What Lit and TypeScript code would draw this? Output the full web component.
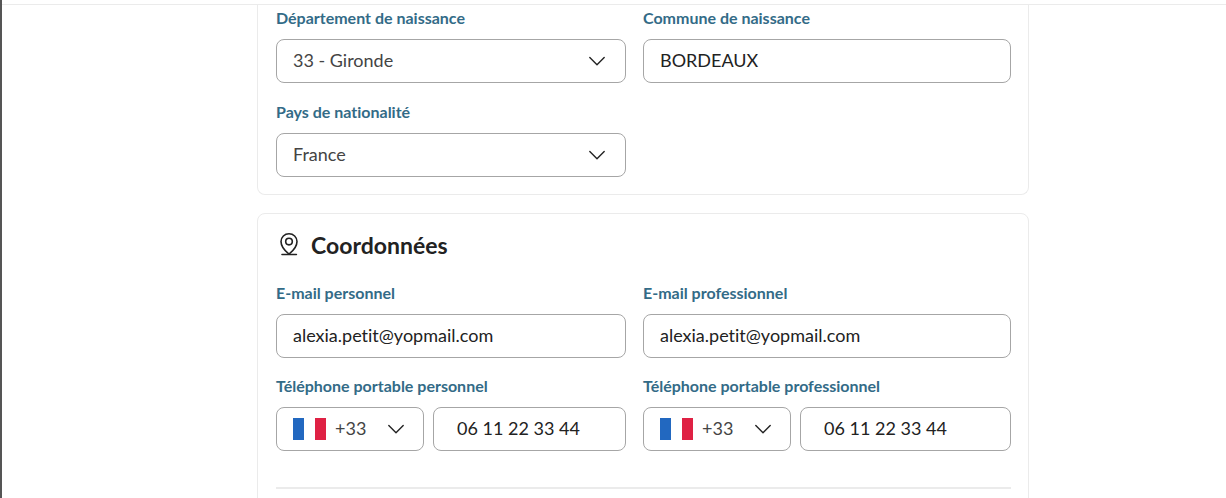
import { LitElement, html, css, svg, nothing } from "lit";
import { customElement, property } from "lit/decorators.js";

const chevron = html`<svg class="chevron" width="18" height="12" viewBox="0 0 18 12" aria-hidden="true">
  <path d="M1.8 2.6 L9 9.7 L16.2 2.6" fill="none" stroke="#222" stroke-width="1.4" stroke-linecap="round" stroke-linejoin="round" />
</svg>`;

const flag = html`<svg class="flag" width="33" height="22" viewBox="0 0 33 22" aria-hidden="true">
  ${svg`<rect width="11" height="22" fill="#2268c0" /><rect x="11" width="11" height="22" fill="#fff" /><rect x="22" width="11" height="22" fill="#df2144" />`}
</svg>`;

const controls = css`
  *,
  *::before,
  *::after {
    box-sizing: border-box;
  }
  .label {
    display: block;
    margin-bottom: 11px;
    font-size: 16px;
    line-height: 20px;
    font-weight: 700;
    color: #336b87;
  }
  .control {
    display: block;
    width: 100%;
    min-width: 0;
    height: 44px;
    margin: 0;
    padding: 0 16px 2px;
    border: 1px solid #a6a6a6;
    border-radius: 8px;
    background: #fff;
    font: 400 18px/24px Lato, "Open Sans", sans-serif;
    font-variant-ligatures: none;
    color: #222;
    appearance: none;
    outline: none;
  }
  .control:focus-visible {
    border-color: #336b87;
  }
  .picker {
    display: grid;
    align-items: center;
  }
  .picker > * {
    grid-area: 1 / 1;
  }
  .picker .control {
    color: #444;
  }
  .chevron {
    justify-self: end;
    margin-right: 20px;
    pointer-events: none;
  }
`;

@customElement("form-field")
export class FormField extends LitElement {
  @property() label = "";
  @property() value = "";
  @property() type = "text";
  @property({ type: Boolean }) choice = false;

  static styles = [
    controls,
    css`
      :host {
        display: block;
        min-width: 0;
      }
    `,
  ];

  render() {
    return html`
      <label class="label" for="control">${this.label}</label>
      ${this.choice
        ? html`<div class="picker">
            <select class="control" id="control">
              <option selected>${this.value}</option>
            </select>
            ${chevron}
          </div>`
        : html`<input class="control" id="control" type=${this.type} .value=${this.value} />`}
    `;
  }
}

@customElement("phone-field")
export class PhoneField extends LitElement {
  @property() label = "";
  @property() value = "";

  static styles = [
    controls,
    css`
      :host {
        display: block;
        min-width: 0;
      }
      .group {
        display: grid;
        grid-template-columns: 148px minmax(0, 1fr);
        gap: 9px;
      }
      .flag {
        margin-left: 17px;
        pointer-events: none;
      }
      .picker .code {
        padding-left: 58px;
      }
      .number {
        padding-left: 23px;
      }
      .group .chevron {
        margin-right: 19px;
      }
    `,
  ];

  render() {
    return html`
      <label class="label" for="number">${this.label}</label>
      <div class="group">
        <div class="picker">
          <select class="control code" aria-label="Indicatif">
            <option selected>+33</option>
          </select>
          ${flag} ${chevron}
        </div>
        <input class="control number" id="number" type="tel" .value=${this.value} />
      </div>
    `;
  }
}

@customElement("form-card")
export class FormCard extends LitElement {
  @property() heading = "";
  @property({ type: Boolean }) continued = false;

  static styles = css`
    :host {
      display: block;
    }
    .card {
      padding: 18px 17px 17px 18px;
      border: 1px solid #ebebeb;
      border-radius: 8px;
      background: #fff;
    }
    .continued {
      padding-top: 3px;
      border-top: 0;
      border-top-left-radius: 0;
      border-top-right-radius: 0;
    }
    .title {
      display: flex;
      align-items: center;
      gap: 9px;
      margin: 0 0 25px;
      font-size: 23px;
      line-height: 26px;
      font-weight: 700;
      color: #222;
    }
  `;

  render() {
    return html`<section class="card ${this.continued ? "continued" : ""}">
      ${this.heading
        ? html`<h2 class="title">
            <svg width="26" height="26" viewBox="0 0 26 26" fill="none" stroke="#222" stroke-width="1.6" stroke-linecap="round" stroke-linejoin="round" aria-hidden="true">
              <path d="M13 22.2 C10.2 20 5 15.2 5 9.6 C5 5 8.6 1.8 13 1.8 C17.4 1.8 21 5 21 9.6 C21 15.2 15.8 20 13 22.2 Z" />
              <circle cx="13" cy="9.6" r="3.3" />
              <path d="M6 22.5 H20.4" />
            </svg>
            ${this.heading}
          </h2>`
        : nothing}
      <slot></slot>
    </section>`;
  }
}

@customElement("app-root")
export class AppRoot extends LitElement {
  static styles = css`
    :host {
      display: block;
      height: 100vh;
      overflow: hidden;
      border-left: 2px solid #555;
      box-sizing: border-box;
      background: #fff;
      font-family: Lato, "Open Sans", sans-serif;
      font-variant-ligatures: none;
    }
    .topbar {
      height: 5px;
      border-bottom: 1px solid #ebebeb;
      box-sizing: border-box;
    }
    .content {
      display: grid;
      gap: 18px;
      padding: 0 197px 0 255px;
    }
    .fields {
      display: grid;
      grid-template-columns: minmax(0, 350fr) minmax(0, 368fr);
      gap: 18px 17px;
    }
    .roomy {
      row-gap: 19px;
    }
    .divider {
      height: 2px;
      margin: 36px 0 18px;
      border: 0;
      background: #ebebeb;
    }
  `;

  render() {
    return html`
      <header class="topbar"></header>
      <main class="content">
        <form-card continued>
          <div class="fields roomy">
            <form-field choice label="Département de naissance" value="33 - Gironde"></form-field>
            <form-field label="Commune de naissance" value="BORDEAUX"></form-field>
            <form-field choice label="Pays de nationalité" value="France"></form-field>
          </div>
        </form-card>
        <form-card heading="Coordonnées">
          <div class="fields">
            <form-field type="email" label="E-mail personnel" value="alexia.petit@yopmail.com"></form-field>
            <form-field type="email" label="E-mail professionnel" value="alexia.petit@yopmail.com"></form-field>
            <phone-field label="Téléphone portable personnel" value="06 11 22 33 44"></phone-field>
            <phone-field label="Téléphone portable professionnel" value="06 11 22 33 44"></phone-field>
          </div>
          <hr class="divider" />
        </form-card>
      </main>
    `;
  }
}
